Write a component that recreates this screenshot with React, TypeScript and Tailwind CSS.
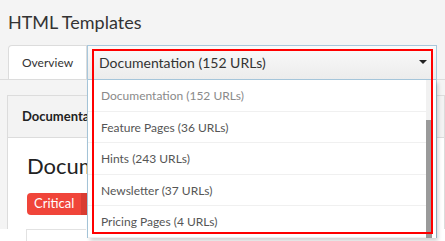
const options = [
  { label: "Documentation (152 URLs)", muted: true },
  { label: "Feature Pages (36 URLs)" },
  { label: "Hints (243 URLs)" },
  { label: "Newsletter (37 URLs)" },
  { label: "Pricing Pages (4 URLs)" },
];

export default function App() {
  return (
    <div className="relative h-[241px] w-[445px] overflow-hidden bg-[#f4f4f4] font-['Lato','Open_Sans',sans-serif] text-[#333]">
      <h1 className="h-[45px] pl-2 pt-[10px] text-[18px] leading-[24px]">HTML Templates</h1>

      {/* tabs */}
      <div className="flex h-[35px] border-b border-[#dcdcdc] pl-2">
        <div className="flex w-[79px] items-center rounded-tl-[4px] border border-b-0 border-[#dcdcdc] bg-white pl-[13px] text-[12px]">
          Overview
        </div>
        <div className="relative w-[350px]">
          <div className="flex h-[35px] items-center justify-between border border-[#a7c7dc] bg-gradient-to-b from-[#fafafa] to-[#ececec] pl-[11px] pr-[9px] text-[14px]">
            <span>Documentation (152 URLs)</span>
            <span className="mb-[2px] h-0 w-0 border-x-[4px] border-t-[4px] border-x-transparent border-t-[#222]" />
          </div>
          <div className="absolute left-0 right-0 top-[35px] z-10 border-x border-[#a7c7dc]">
            <div className="flex bg-white shadow-[2px_3px_4px_rgba(0,0,0,0.18)]">
              <ul className="flex-1">
                {options.map((o) => (
                  <li
                    key={o.label}
                    className={`flex h-[31.5px] items-center border-b border-[#f0f0f0] pl-[13px] pt-[2px] text-[12px] ${o.muted ? "text-[#8a8a8a]" : "text-[#555]"}`}
                  >
                    {o.label}
                  </li>
                ))}
              </ul>
              <div className="flex w-[6px] flex-col bg-[#f1f1f1]">
                <div className="h-[40px]" />
                <div className="flex-1 bg-[#9a9a9a]" />
              </div>
              <div className="w-[4px]" />
            </div>
          </div>
        </div>
      </div>

      {/* card */}
      <div className="ml-[7px] mt-[15px] border border-[#dcdcdc]">
        <div className="flex h-[42px] items-center border-b border-[#dcdcdc] bg-[#f3f3f3] pl-[14px] text-[13px] font-bold text-[#222]">
          Documentation
        </div>
        <div className="h-[100px] bg-white pl-[19px] pt-[13px]">
          <div className="text-[22px] leading-[30px] text-[#222]">Documentation</div>
          <div className="mt-[12px] flex h-[22px] w-fit overflow-hidden rounded-l-[4px] text-[13px] text-white">
            <span className="flex items-center bg-[#f0453a] px-[7px]">Critical</span>
            <span className="flex items-center bg-[#d93c32] px-[8px]">Critical</span>
          </div>
        </div>
      </div>

      {/* bottom strip */}
      <div className="absolute bottom-0 left-0 right-0 h-[12px] bg-white">
        <div className="ml-[26px] h-full w-[60px] border-l border-t border-[#e2e2e2]" />
      </div>

      {/* highlight outline */}
      <div className="pointer-events-none absolute left-[92px] top-[49px] z-20 h-[185px] w-[341px] border-2 border-[#ff0000]" />
    </div>
  );
}
